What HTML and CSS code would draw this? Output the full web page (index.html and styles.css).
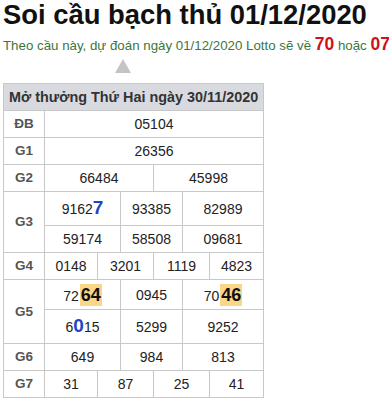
FILE: index.html
```html
<!DOCTYPE html>
<html lang="vi">
<head>
<meta charset="utf-8">
<title>Soi cầu bạch thủ 01/12/2020</title>
<link rel="stylesheet" href="styles.css">
</head>
<body>
<div class="page">
  <h1 class="title">Soi cầu bạch thủ 01/12/2020</h1>
  <p class="sub">Theo cầu này, dự đoán ngày 01/12/2020 Lotto sẽ về <b class="red">70</b> hoặc <b class="red">07</b></p>
  <div class="arrow"></div>
  <div class="kq">
    <div class="head">Mở thưởng Thứ Hai ngày 30/11/2020</div>

    <div class="lbl">ĐB</div>
    <div class="c span-all">05104</div>

    <div class="lbl">G1</div>
    <div class="c span-all">26356</div>

    <div class="lbl">G2</div>
    <div class="c c2a">66484</div>
    <div class="c c2b">45998</div>

    <div class="lbl lbl-2">G3</div>
    <div class="c c3a"><span>9162<b class="blue">7</b></span></div>
    <div class="c c3b">93385</div>
    <div class="c c3c">82989</div>
    <div class="c c3a">59174</div>
    <div class="c c3b">58508</div>
    <div class="c c3c">09681</div>

    <div class="lbl">G4</div>
    <div class="c c4a">0148</div>
    <div class="c c4b">3201</div>
    <div class="c c4c">1119</div>
    <div class="c c4d">4823</div>

    <div class="lbl lbl-2">G5</div>
    <div class="c c3a"><span>72<b class="hl">64</b></span></div>
    <div class="c c3b">0945</div>
    <div class="c c3c"><span>70<b class="hl">46</b></span></div>
    <div class="c c3a"><span>6<b class="blue">0</b>15</span></div>
    <div class="c c3b">5299</div>
    <div class="c c3c">9252</div>

    <div class="lbl">G6</div>
    <div class="c c3a">649</div>
    <div class="c c3b">984</div>
    <div class="c c3c">813</div>

    <div class="lbl">G7</div>
    <div class="c c4a">31</div>
    <div class="c c4b">87</div>
    <div class="c c4c">25</div>
    <div class="c c4d">41</div>
  </div>
</div>
</body>
</html>
```
FILE: styles.css
```css
html, body {
  margin: 0;
  padding: 0;
  background: #ffffff;
}
body {
  font-family: "Liberation Sans", Arial, sans-serif;
  color: #222;
}
.page {
  padding: 0 3px;
}
.title {
  margin: 0;
  font-size: 27.4px;
  line-height: 30px;
  font-weight: bold;
  color: #111;
  white-space: nowrap;
}
.sub {
  margin: 4px 0 0;
  font-size: 13.3px;
  line-height: 20px;
  color: #3c763d;
  white-space: nowrap;
}
.red {
  color: #d0101a;
  font-size: 17.5px;
}
.arrow {
  width: 0;
  height: 0;
  margin: 3px 0 0 112px;
  border-left: 8px solid transparent;
  border-right: 8px solid transparent;
  border-bottom: 14px solid #c4c4c4;
}
.kq {
  margin-top: 10px;
  width: 261px;
  box-sizing: border-box;
  display: grid;
  grid-template-columns: 40px 52px 22px 32px 28px 26px 53px;
  grid-template-rows: 26px 26px 26px 26px 33px 26px 26px 29px 33px 26px 26px;
  gap: 1px;
  border: 1px solid #c8c8c8;
  background: #c8c8c8;
}
.kq > div {
  background: #fff;
  display: flex;
  align-items: center;
  justify-content: center;
  font-size: 14px;
  line-height: 18px;
}
.kq > .head {
  grid-column: 1 / -1;
  justify-content: flex-start;
  padding-left: 5px;
  background: #d8dae0;
  font-weight: bold;
  font-size: 14.4px;
  color: #333;
}
.kq > .lbl {
  grid-column: 1;
  font-weight: bold;
  font-size: 13.5px;
  color: #555;
}
.kq > .lbl-2 {
  grid-row: span 2;
}
.span-all { grid-column: 2 / -1; }
.c2a { grid-column: 2 / 5; }
.c2b { grid-column: 5 / 8; }
.c3a { grid-column: 2 / 4; }
.c3b { grid-column: 4 / 6; }
.c3c { grid-column: 6 / 8; }
.c4a { grid-column: 2 / 3; }
.c4b { grid-column: 3 / 5; }
.c4c { grid-column: 5 / 7; }
.c4d { grid-column: 7 / 8; }
.blue {
  color: #1d45c4;
  font-size: 19px;
}
.hl {
  display: inline-block;
  background: #fad68a;
  color: #111;
  font-size: 18px;
  line-height: 22px;
  padding: 0 1px;
  margin-left: 1px;
}
```
